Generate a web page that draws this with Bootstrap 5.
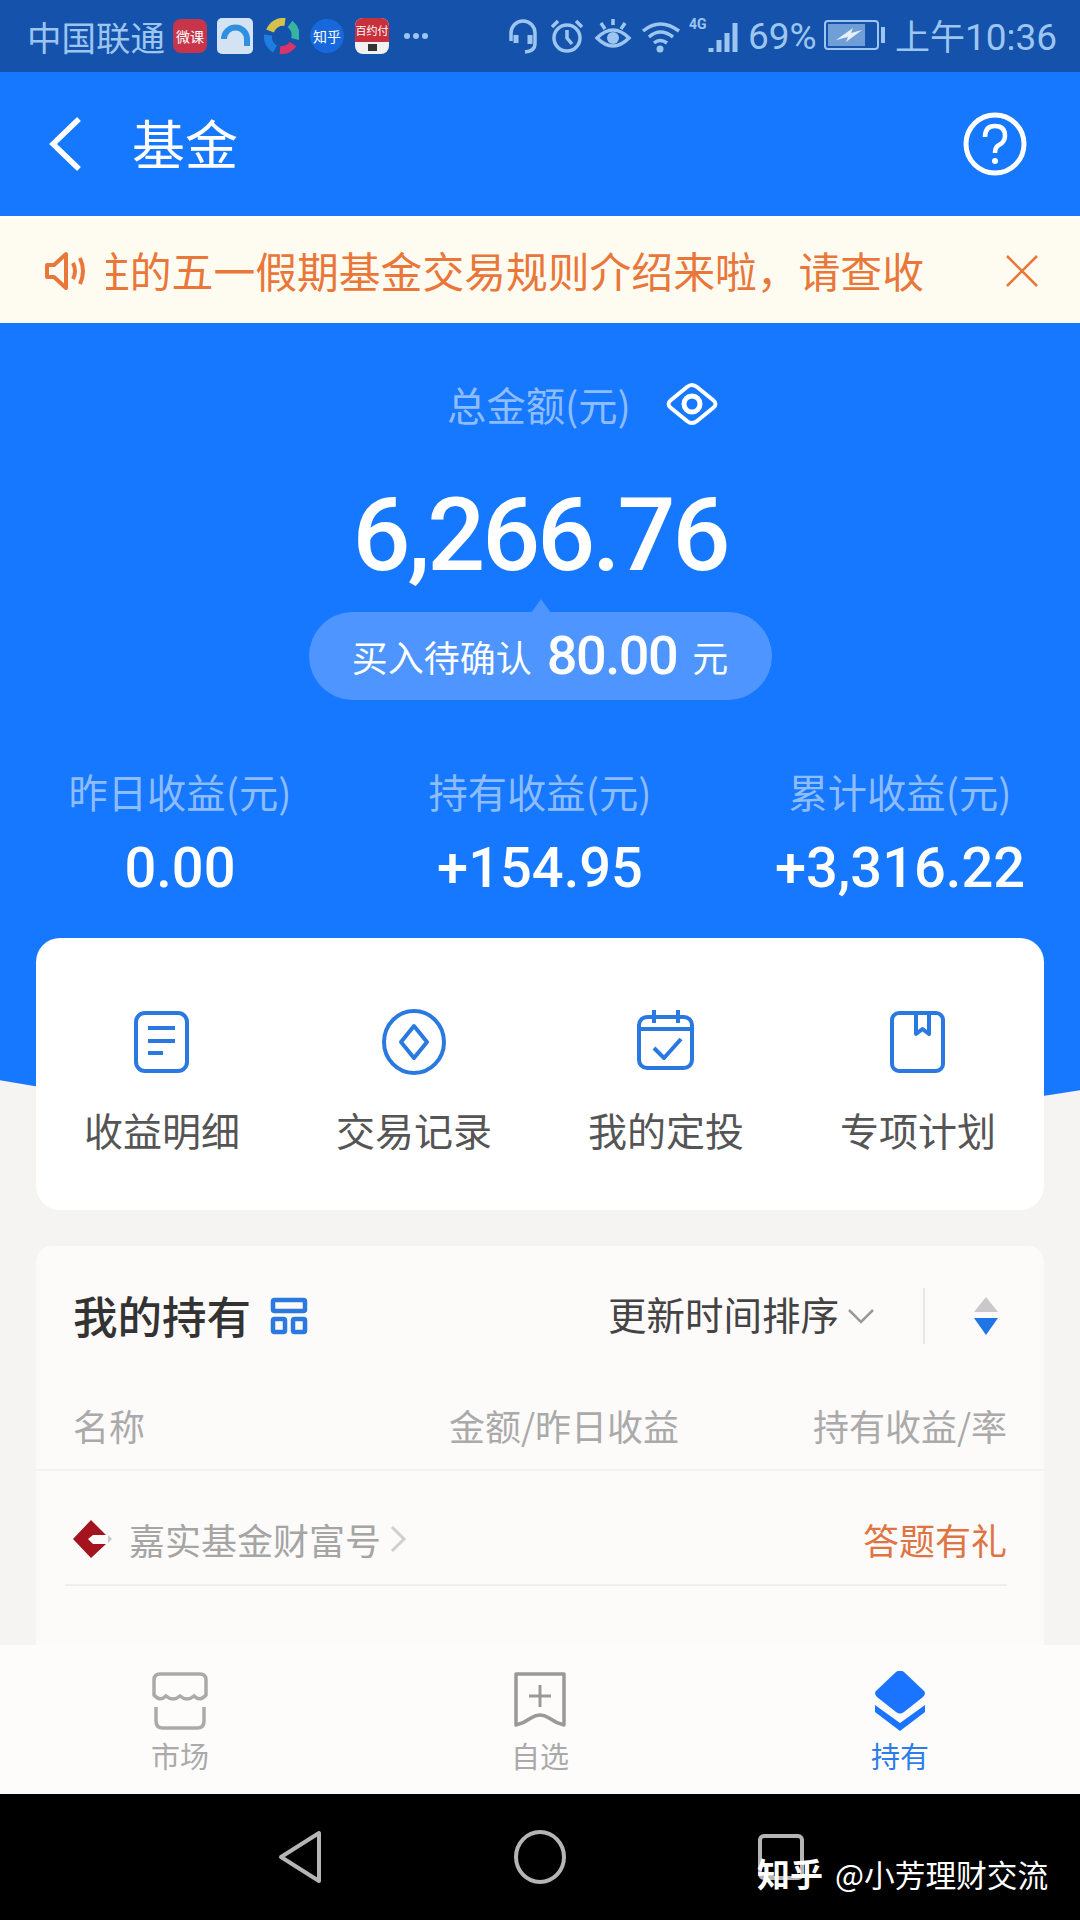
<!DOCTYPE html>
<html lang="zh-CN">
<head>
    <meta charset="UTF-8">
    <meta name="viewport" content="width=device-width, initial-scale=1.0">
    <title>基金</title>
    <link href="https://cdn.jsdelivr.net/npm/bootstrap@5.3.0/dist/css/bootstrap.min.css" rel="stylesheet">
    <style>
        html, body { margin: 0; background: #f6f4f3; }
        body {
            width: 1080px;
            height: 1920px;
            overflow: hidden;
            font-family: "Noto Sans CJK SC", sans-serif;
        }
        .num { font-family: Roboto, "Noto Sans CJK SC", sans-serif; }

        .status-bar { height: 72px; background: #1552ab; color: #9cc6f0; padding-left: 27px; }
        .status-bar svg { flex: none; }
        .st-line { fill: none; stroke: #9cc6f0; }
        .st-fill { fill: #9cc6f0; stroke: none; }
        .sg-6 { margin-left: 6px; }
        .sg-9 { margin-left: 9px; }
        .sg-10 { margin-left: 10px; }
        .sg-11 { margin-left: 11px; }
        .sg-14 { margin-left: 14px; }
        .sg-78 { margin-left: 78px; }
        .carrier { font-size: 34.5px; line-height: 1; width: 146px; }
        .app-ico { width: 34px; height: 34px; flex: none; color: #fff; font-size: 14px; line-height: 1; }
        .ico-wk { background: #c8354b; border-radius: 8px; }
        .ico-zh { background: #1668dc; border-radius: 50%; }
        .ico-by { background: #f1f1f1; border-radius: 8px; height: 36px; overflow: hidden; }
        .ico-by-top { height: 24px; background: #c8303c; font-size: 11px; }
        .ico-by-dot { width: 9px; height: 7px; background: #333; margin: 2px auto 0; }
        .st-pct { font-size: 37px; width: 66px; margin-left: 9px; line-height: 1; }
        .st-time { font-size: 35px; line-height: 1; margin-left: 9px; white-space: nowrap; }
        .st-time .num { font-size: 37px; }

        .top-bar { height: 144px; background: #1677ff; color: #fff; padding: 0 53px 0 47px; }
        .top-title { font-size: 53px; line-height: 1; margin: 0 0 4px 48px; }

        .notice-bar {
            height: 107px;
            background: #fefbf1;
            border-top: 2px solid #fff;
            padding-left: 44px;
            color: #e9773a;
        }
        .notice-clip { width: 820px; margin-left: 18px; overflow: hidden; white-space: nowrap; font-size: 41.8px; line-height: 1.2; }
        .notice-clip span { margin-left: -18px; display: inline-block; }
        .notice-x { margin-right: 41px; }

        .page-wrap { position: relative; }
        .hero-bg {
            position: absolute;
            top: 0; left: 0; right: 0;
            height: 807px;
            background: #1677ff;
            clip-path: circle(3290px at 570px calc(100% - 3290px));
        }
        .hero { position: relative; height: 615px; padding-top: 58px; color: #fff; }
        .hero-label { color: #8dbcff; font-size: 39.3px; line-height: 46px; white-space: nowrap; }
        .total-label { margin: 0 34px 0 86px; }
        .total-num { font-size: 102px; line-height: 120px; font-weight: 500; letter-spacing: -3px; margin-top: 48px; }
        .pending {
            position: relative;
            width: 463px;
            height: 88px;
            margin: 17px auto 0;
            background: #4e95ff;
            border-radius: 44px;
            font-size: 36px;
        }
        .pending::before {
            content: "";
            position: absolute;
            left: 222px; top: -13px;
            border: 10px solid transparent;
            border-top: 0;
            border-bottom: 14px solid #4e95ff;
        }
        .pending .num { font-size: 54px; letter-spacing: -1.5px; font-weight: 500; margin: 0 15px 0 15px; line-height: 1; }
        .stat-row { margin-top: 68px; }
        .stat-val { font-size: 56px; line-height: 66px; margin-top: 21px; font-weight: 500; }

        .menu-card {
            position: relative;
            margin: 0 36px;
            height: 272px;
            background: #fff;
            border: 0;
            border-radius: 24px;
            padding-top: 69px;
        }
        .menu-ico { width: 70px; height: 70px; fill: none; stroke: #2a79e0; stroke-width: 4; stroke-linejoin: round; display: block; margin: 0 auto; }
        .menu-text { font-size: 39px; line-height: 46px; color: #555; margin-top: 29px; }

        .hold-card {
            position: relative;
            margin: 36px 36px 0;
            height: 399px;
            background: #fdfbfa;
            border: 0;
            border-radius: 16px 16px 0 0;
            padding: 0 37px;
        }
        .hold-head { height: 140px; flex: none; }
        .hold-title { font-size: 44.5px; line-height: 1; color: #333; font-weight: 500; margin-bottom: 2px; }
        .grid-ico { margin-left: 19px; }
        .sort-text { font-size: 38.5px; line-height: 1; color: #444; margin-bottom: 6px; }
        .sort-sep { width: 2px; height: 56px; background: #e8e6e5; margin: 0 48px 0 48px; }
        .col-heads {
            height: 85px;
            flex: none;
            color: #aaa;
            font-size: 36px;
            white-space: nowrap;
            border-bottom: 2px solid #f4f2f1;
            margin: 0 -37px;
            padding: 0 37px 6px;
        }
        .h-name { width: 376px; }
        .fund-row {
            height: 115px;
            flex: none;
            border-bottom: 2px solid #f0eeed;
            margin-left: -8px;
            padding: 22px 0 0 8px;
            color: #a5a5a5;
            font-size: 36px;
        }
        .fund-gift { color: #df7443; }

        .tab-bar { position: relative; height: 149px; background: #fdfcfb; padding-top: 26px; }
        .tab-ico { display: block; margin: 0 auto; width: 60px; height: 60px; }
        .tab-text { font-size: 29px; line-height: 34px; margin-top: 7px; color: #aaa; }
        .tab-on { color: #2b7de9; }

        .sys-nav { position: relative; height: 126px; background: #000; }
        .sys-nav svg { fill: none; stroke: #b5b5b5; stroke-width: 4; stroke-linejoin: round; }
        .nav-back { margin: 36px 0 0 277px; }
        .nav-home { margin: 36px 0 0 190px; }
        .nav-recent { margin: 39px 0 0 190px; }
        .watermark {
            position: absolute;
            left: 757px; top: 57px;
            color: #fff;
            font-size: 30.7px;
            line-height: 44px;
            white-space: nowrap;
        }
        .watermark b { font-size: 33px; margin-right: 12px; }
    </style>
</head>
<body>
    <!-- status bar -->
    <div class="status-bar d-flex align-items-center">
        <div class="carrier">中国联通</div>
        <div class="app-ico ico-wk d-flex align-items-center justify-content-center">微课</div>
        <svg class="sg-10" width="36" height="36" viewBox="0 0 36 36">
            <rect width="36" height="36" rx="5" fill="#d3e3f4"/>
            <path d="M7 21 A11.5 11.5 0 0 1 30 21 L30 28" fill="none" stroke="#2f8fe0" stroke-width="6"/>
        </svg>
        <svg class="sg-10" width="36" height="36" viewBox="0 0 36 36" fill="none" stroke-width="8">
            <path d="M7 13 A14 14 0 0 1 22 4" stroke="#d6c24a"/>
            <path d="M27 6 A14 14 0 0 1 32 21" stroke="#37b3a0"/>
            <path d="M30 26 A14 14 0 0 1 17 32" stroke="#d7356a"/>
            <path d="M12 31 A14 14 0 0 1 5 17" stroke="#1f7fe0"/>
        </svg>
        <div class="app-ico ico-zh d-flex align-items-center justify-content-center sg-11">知乎</div>
        <div class="app-ico ico-by sg-11">
            <div class="ico-by-top d-flex align-items-center justify-content-center">百约付</div>
            <div class="ico-by-dot"></div>
        </div>
        <svg class="sg-14" width="26" height="8" viewBox="0 0 26 8">
            <g class="st-fill"><circle cx="4" cy="4" r="3"/><circle cx="13" cy="4" r="3"/><circle cx="22" cy="4" r="3"/></g>
        </svg>

        <svg class="st-line sg-78" width="32" height="38" viewBox="0 0 32 38" stroke-width="3.5">
            <path d="M4 24 V16 A12 12 0 0 1 28 16 V27 Q28 34 18 35"/>
            <path d="M9 18 V26 M23 18 V27" stroke-width="5"/>
        </svg>
        <svg class="st-line sg-10" width="36" height="36" viewBox="0 0 36 36" stroke-width="3.5">
            <circle cx="18" cy="20" r="13"/>
            <path d="M18 12 V20 L23 26 M3 9 L9 3 M33 9 L27 3"/>
        </svg>
        <svg class="st-line sg-9" width="38" height="36" viewBox="0 0 38 36" stroke-width="3.5">
            <path d="M3 20 Q19 4 35 20 Q19 36 3 20 Z"/>
            <circle class="st-fill" cx="19" cy="20" r="6"/>
            <path d="M7 5 L11 11 M31 5 L27 11 M19 1 V7"/>
        </svg>
        <svg class="st-line sg-9" width="42" height="36" viewBox="0 0 42 36" stroke-width="3.5">
            <path d="M2 13 Q19 -1 38 13 M8 19 Q19 9 32 19 M13 25 Q19 20 26 25"/>
            <circle class="st-fill" cx="19" cy="31" r="3.5"/>
        </svg>
        <svg class="st-line sg-6" width="50" height="40" viewBox="0 0 50 40">
            <text class="st-fill" x="0" y="13" font-size="14" font-weight="700" font-family="Roboto">4G</text>
            <path d="M22 32 V36 M30 24 V36 M38 17 V36 M46 7 V36" stroke-width="5"/>
        </svg>
        <div class="num st-pct">69%</div>
        <svg class="st-line sg-10" width="62" height="32" viewBox="0 0 62 32" stroke-width="2">
            <rect x="1" y="1" width="53" height="28" rx="3"/>
            <rect x="4" y="4" width="37" height="22" fill="#6f9fd6" stroke="none"/>
            <path d="M12 20 L24 17 L22 22 L38 10 L27 13 L29 8 Z" fill="#e4effb" stroke="none"/>
            <rect class="st-fill" x="57" y="7" width="4" height="16"/>
        </svg>
        <div class="st-time">上午<span class="num">10:36</span></div>
    </div>

    <!-- title bar -->
    <div class="top-bar d-flex align-items-center">
        <svg width="37" height="56" viewBox="0 0 37 56" fill="none" stroke="#fff" stroke-width="5.5"><path d="M32 3 L6 28 L32 53"/></svg>
        <div class="top-title">基金</div>
        <svg class="ms-auto" width="64" height="64" viewBox="0 0 64 64" fill="none" stroke="#fff" stroke-width="5">
            <circle cx="32" cy="32" r="29"/>
            <path d="M22 25 Q22 14 32 14 Q42 14 42 24 Q42 30 36 33 Q32 35 32 41" stroke-width="4.5"/>
            <circle cx="32" cy="49" r="3" fill="#fff" stroke="none"/>
        </svg>
    </div>

    <!-- notice -->
    <div class="notice-bar d-flex align-items-center">
        <svg width="44" height="40" viewBox="0 0 44 40" fill="none" stroke="#e9773a" stroke-width="4" stroke-linejoin="round">
            <path d="M3 14 H10 L22 3 V37 L10 26 H3 Z"/>
            <path d="M29 12 Q33 20 29 28 M36 7 Q42 20 36 33"/>
        </svg>
        <div class="notice-clip"><span>往的五一假期基金交易规则介绍来啦，请查收</span></div>
        <svg class="ms-auto notice-x" width="34" height="34" viewBox="0 0 34 34" fill="none" stroke="#e9773a" stroke-width="2.5"><path d="M2 2 L32 32 M32 2 L2 32"/></svg>
    </div>

    <div class="page-wrap">
        <div class="hero-bg"></div>

        <div class="hero text-center">
            <div class="hero-label d-flex justify-content-center align-items-center">
                <span class="total-label">总金额(元)</span>
                <svg width="54" height="44" viewBox="0 0 54 44" fill="none" stroke="#fff" stroke-width="4" stroke-linejoin="round">
                    <path d="M6 18 L22 5 Q27 1 32 5 L48 18 Q53 22 48 26 L32 39 Q27 43 22 39 L6 26 Q1 22 6 18 Z"/>
                    <circle cx="27" cy="22" r="8" stroke-width="5"/>
                </svg>
            </div>
            <div class="total-num num">6,266.76</div>
            <div class="pending d-flex align-items-center justify-content-center">
                <span>买入待确认</span><span class="num">80.00</span><span>元</span>
            </div>
            <div class="row g-0 stat-row">
                <div class="col-4">
                    <div class="hero-label">昨日收益(元)</div>
                    <div class="stat-val num">0.00</div>
                </div>
                <div class="col-4">
                    <div class="hero-label">持有收益(元)</div>
                    <div class="stat-val num">+154.95</div>
                </div>
                <div class="col-4">
                    <div class="hero-label">累计收益(元)</div>
                    <div class="stat-val num">+3,316.22</div>
                </div>
            </div>
        </div>

        <div class="card menu-card">
            <div class="row g-0 text-center">
                <div class="col-3">
                    <svg class="menu-ico" viewBox="0 0 70 70">
                        <rect x="9" y="6" width="51" height="58" rx="9"/>
                        <path d="M21 21 H48 M21 34 H48 M21 46 H36"/>
                    </svg>
                    <div class="menu-text">收益明细</div>
                </div>
                <div class="col-3">
                    <svg class="menu-ico" viewBox="0 0 70 70">
                        <ellipse cx="35" cy="35" rx="30" ry="31"/>
                        <path d="M35 19 L48 35 L35 51 L22 35 Z"/>
                    </svg>
                    <div class="menu-text">交易记录</div>
                </div>
                <div class="col-3">
                    <svg class="menu-ico" viewBox="0 0 70 70">
                        <rect x="8" y="10" width="53" height="51" rx="8"/>
                        <path d="M8 22 H61 M23 3 V16 M47 3 V16"/>
                        <path d="M23 41 L33 51 L50 32"/>
                    </svg>
                    <div class="menu-text">我的定投</div>
                </div>
                <div class="col-3">
                    <svg class="menu-ico" viewBox="0 0 70 70">
                        <rect x="9" y="6" width="51" height="58" rx="7"/>
                        <path d="M33 6 V27 L39.5 22 L46 27 V6"/>
                    </svg>
                    <div class="menu-text">专项计划</div>
                </div>
            </div>
        </div>

        <div class="card hold-card">
            <div class="hold-head d-flex align-items-center">
                <div class="hold-title">我的持有</div>
                <svg class="grid-ico" width="38" height="38" viewBox="0 0 38 38" fill="none" stroke="#2a79e0" stroke-width="4.5">
                    <rect x="3" y="3" width="32" height="11" rx="1.5"/>
                    <rect x="3" y="22" width="12" height="13" rx="1.5"/>
                    <rect x="23" y="22" width="12" height="13" rx="1.5"/>
                </svg>
                <div class="sort-text ms-auto">更新时间排序</div>
                <svg class="ms-2" width="28" height="16" viewBox="0 0 28 16" fill="none" stroke="#999" stroke-width="2.5"><path d="M2 2 L14 14 L26 2"/></svg>
                <div class="sort-sep"></div>
                <svg class="me-2" width="26" height="38" viewBox="0 0 26 38">
                    <path d="M13 0 L25 15 H1 Z" fill="#c9c9cb"/>
                    <path d="M1 21 H25 L13 38 Z" fill="#1f74e6"/>
                </svg>
            </div>
            <div class="col-heads d-flex align-items-center">
                <div class="h-name">名称</div>
                <div>金额/昨日收益</div>
                <div class="ms-auto">持有收益/率</div>
            </div>
            <div class="fund-row d-flex align-items-center">
                <svg class="me-3" width="40" height="38" viewBox="0 0 40 38">
                    <path d="M0 19 L18 0 L33 15 H20 L15 19 L20 24 H33 L18 38 Z" fill="#a3141e"/>
                    <path d="M35 15 L39 19 L35 23 Z" fill="#c9c9c9"/>
                </svg>
                <span>嘉实基金财富号</span>
                <svg class="ms-2" width="18" height="28" viewBox="0 0 18 28" fill="none" stroke="#cfcfcf" stroke-width="3"><path d="M3 2 L15 14 L3 26"/></svg>
                <span class="fund-gift ms-auto">答题有礼</span>
            </div>
        </div>
    </div>

    <!-- tabs -->
    <div class="tab-bar row g-0 text-center">
        <div class="col-4">
            <svg class="tab-ico" viewBox="0 0 60 60" fill="none" stroke="#aaa" stroke-width="3.5">
                <path d="M10 3 H50 Q56 3 56 9 V24 Q50 31 44 25 Q37 31 30 25 Q23 31 16 25 Q10 31 4 24 V9 Q4 3 10 3 Z"/>
                <path d="M6 36 V50 Q6 57 13 57 H47 Q54 57 54 50 V36"/>
            </svg>
            <div class="tab-text">市场</div>
        </div>
        <div class="col-4">
            <svg class="tab-ico" viewBox="0 0 60 60" fill="none" stroke="#999" stroke-width="3.5" stroke-linejoin="round">
                <path d="M6 3 H54 V54 Q46 52 39 47 Q30 41 21 47 Q14 52 6 54 Z"/>
                <path d="M30 14 V36 M19 25 H41" stroke-width="3"/>
            </svg>
            <div class="tab-text">自选</div>
        </div>
        <div class="col-4">
            <svg class="tab-ico" viewBox="0 0 60 60" fill="#1b74ff">
                <path d="M26 1 Q30 -2 34 1 L53 19 Q57 22 53 26 L34 41 Q30 44 26 41 L7 26 Q3 22 7 19 Z"/>
                <path d="M5 34 L30 52 L55 34 V41 L30 60 L5 41 Z"/>
            </svg>
            <div class="tab-text tab-on">持有</div>
        </div>
    </div>

    <!-- system navigation -->
    <div class="sys-nav d-flex align-items-start">
        <svg class="nav-back" width="46" height="54" viewBox="0 0 46 54"><path d="M42 3 V51 L4 27 Z"/></svg>
        <svg class="nav-home" width="54" height="54" viewBox="0 0 54 54"><ellipse cx="27" cy="27" rx="24" ry="25"/></svg>
        <svg class="nav-recent" width="48" height="48" viewBox="0 0 48 48"><rect x="3" y="3" width="42" height="42" rx="4"/></svg>
        <div class="watermark"><b>知乎</b>@小芳理财交流</div>
    </div>

    <script src="https://cdn.jsdelivr.net/npm/bootstrap@5.3.0/dist/js/bootstrap.bundle.min.js"></script>
</body>
</html>
